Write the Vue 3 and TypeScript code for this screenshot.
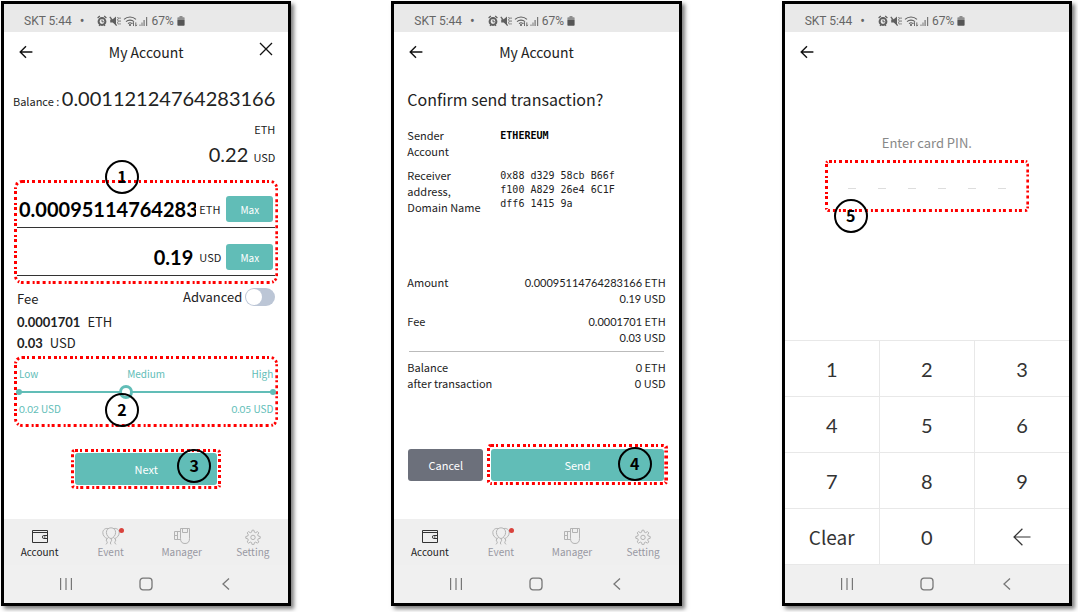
<script setup lang="ts">
import { ref } from 'vue'

type ScreenId = 'send' | 'confirm' | 'pin'
type TabIcon = 'wallet' | 'balloons' | 'card' | 'gear'

interface Screen {
  id: ScreenId
  title: string
  closable: boolean
  tabs: boolean
}

interface Tab {
  label: string
  icon: TabIcon
  badge: boolean
}

const screens: Screen[] = [
  { id: 'send', title: 'My Account', closable: true, tabs: true },
  { id: 'confirm', title: 'My Account', closable: false, tabs: true },
  { id: 'pin', title: '', closable: false, tabs: false },
]

const tabs: Tab[] = [
  { label: 'Account', icon: 'wallet', badge: false },
  { label: 'Event', icon: 'balloons', badge: true },
  { label: 'Manager', icon: 'card', badge: false },
  { label: 'Setting', icon: 'gear', badge: false },
]

const amountEth = ref('0.00095114764283166')
const amountUsd = ref('0.19')
const advanced = ref(false)
const feeLevel = ref(5)
const pin = ref<string[]>(['', '', '', '', '', ''])
const keys: string[] = ['1', '2', '3', '4', '5', '6', '7', '8', '9']

function press(key: string): void {
  const i = pin.value.indexOf('')
  if (i >= 0) pin.value[i] = key
}

function clearPin(): void {
  pin.value = ['', '', '', '', '', '']
}

function erase(): void {
  const filled = pin.value.filter((d) => d !== '').length
  if (filled > 0) pin.value[filled - 1] = ''
}
</script>

<template>
  <main class="board">
    <article v-for="s in screens" :key="s.id" class="phone">
      <div class="status">
        <span class="carrier">SKT 5:44</span>
        <span class="bullet">•</span>
        <svg class="status-icons" viewBox="0 0 51 12" width="51" height="12" aria-hidden="true">
          <g fill="none" stroke="#5f5f5f">
            <circle cx="5" cy="6.5" r="3.4" stroke-width="2" />
            <path d="M0.6 3 L2.8 1 M9.4 3 L7.2 1 M2 10.8 L3 9.6 M8 10.8 L7 9.6" stroke-width="1.2" />
            <path d="M5 4.6 V6.8 H6.8" stroke-width="1" />
            <path d="M12.8 1.8 L19.6 10.6" stroke-width="1.3" />
            <path d="M20.6 2 L21.4 3.4 L20.6 4.8 L21.4 6.2 L20.6 7.6 L21.4 9.4 M23 2.4 V4 M23 5.2 V7 M23 8.2 V9.6" stroke-width="0.9" />
            <path d="M27 4.4 C30.4 1.2 35.6 1.2 39 4.4 M29 6.6 C31.2 4.6 34.8 4.6 37 6.6 M31 8.6 C32.2 7.6 33.8 7.6 35 8.6" stroke-width="1.1" />
            <path d="M36.5 7.4 V11 M38.8 7.4 V11 M35.4 8.6 L36.5 7.2 M39.8 9.8 L38.8 11.2" stroke-width="0.9" />
          </g>
          <path d="M13.2 4.6 H15.4 L19 1.6 V10 L15.6 7.6 H13.2 Z" fill="#5f5f5f" />
          <circle cx="33" cy="10" r="1.1" fill="#5f5f5f" />
          <path d="M42.5 9.5 h1 v1.5 h-1 z M44.5 7.5 h1 v3.5 h-1 z M46.5 5 h1.2 v6 h-1.2 z M49 2 h1.2 v9 h-1.2 z" fill="#777" />
        </svg>
        <span class="percent">67%</span>
        <svg viewBox="0 0 8 10" width="8" height="10" aria-hidden="true">
          <path d="M2.5 0 H5.5 V1.2 H7 Q7.6 1.2 7.6 2 V4 H0.4 V2 Q0.4 1.2 1 1.2 H2.5 Z" fill="#8e8e8e" />
          <path d="M0.4 4 H7.6 V9 Q7.6 9.8 6.8 9.8 H1.2 Q0.4 9.8 0.4 9 Z" fill="#555" />
        </svg>
      </div>

      <header class="bar">
        <button class="icon-button" type="button" aria-label="Back">
          <svg viewBox="0 0 14 14" width="14" height="14" fill="none" stroke="#111" stroke-width="1.4">
            <path d="M13.4 7 H1.4 M7 1.2 L1.2 7 L7 12.8" />
          </svg>
        </button>
        <h1 class="title">{{ s.title }}</h1>
        <button v-if="s.closable" class="icon-button close" type="button" aria-label="Close">
          <svg viewBox="0 0 14 14" width="14" height="14" fill="none" stroke="#111" stroke-width="1.3">
            <path d="M1 1 L13 13 M13 1 L1 13" />
          </svg>
        </button>
      </header>

      <section v-if="s.id === 'send'" class="body">
        <div class="balance">
          <p class="balance-row">
            <span class="small">Balance : </span><span>0.00112124764283166</span>
          </p>
          <p class="balance-row"><span class="small">ETH</span></p>
          <p class="balance-row"><span>0.22</span> <span class="small">USD</span></p>
        </div>

        <div class="callout amounts">
          <svg class="outline" aria-hidden="true"><rect width="100%" height="100%" rx="8" /></svg>
          <div class="amount">
            <input id="amount-eth" v-model="amountEth" class="num amount-input" type="text" />
            <label for="amount-eth" class="unit">ETH</label>
            <button class="max" type="button">Max</button>
          </div>
          <div class="amount">
            <input id="amount-usd" v-model="amountUsd" class="num amount-input right" type="text" />
            <label for="amount-usd" class="unit">USD</label>
            <button class="max" type="button">Max</button>
          </div>
          <span class="step step-1">1</span>
        </div>

        <div class="fee">
          <div class="fee-head">
            <h2 class="fee-title">Fee</h2>
            <label class="advanced">
              Advanced
              <input v-model="advanced" class="switch" type="checkbox" role="switch" />
            </label>
          </div>
          <p class="fee-row"><b class="num">0.0001701</b><span>ETH</span></p>
          <p class="fee-row"><b class="num">0.03</b><span>USD</span></p>
        </div>

        <div class="callout levels">
          <svg class="outline" aria-hidden="true"><rect width="100%" height="100%" rx="8" /></svg>
          <div class="level-names"><span>Low</span><span>Medium</span><span>High</span></div>
          <div class="slider">
            <input v-model.number="feeLevel" type="range" min="0" max="12" aria-label="Fee level" />
          </div>
          <div class="level-values">
            <span><span class="num">0.02</span> USD</span>
            <span><span class="num">0.05</span> USD</span>
          </div>
          <span class="step step-2">2</span>
        </div>

        <div class="callout tight next">
          <svg class="outline" aria-hidden="true"><rect width="100%" height="100%" rx="4" /></svg>
          <button class="action" type="button">Next</button>
          <span class="step step-3">3</span>
        </div>
      </section>

      <section v-else-if="s.id === 'confirm'" class="body confirm">
        <h2 class="question">Confirm send transaction?</h2>
        <dl class="parties">
          <dt>Sender<br />Account</dt>
          <dd class="strong">ETHEREUM</dd>
          <dt>Receiver<br />address,<br />Domain Name</dt>
          <dd>0x88 d329 58cb B66f<br />f100 A829 26e4 6C1F<br />dff6 1415 9a</dd>
        </dl>
        <dl class="totals">
          <dt>Amount</dt>
          <dd><span class="num">0.00095114764283166</span> ETH<br /><span class="num">0.19</span> USD</dd>
          <dt>Fee</dt>
          <dd><span class="num">0.0001701</span> ETH<br /><span class="num">0.03</span> USD</dd>
        </dl>
        <hr class="rule" />
        <dl class="totals">
          <dt>Balance<br />after transaction</dt>
          <dd><span class="num">0</span> ETH<br /><span class="num">0</span> USD</dd>
        </dl>
        <div class="actions">
          <button class="action cancel" type="button">Cancel</button>
          <div class="callout tight send">
            <svg class="outline" aria-hidden="true"><rect width="100%" height="100%" rx="4" /></svg>
            <button class="action" type="button">Send</button>
            <span class="step step-4">4</span>
          </div>
        </div>
      </section>

      <section v-else class="body">
        <p class="prompt">Enter card PIN.</p>
        <div class="callout tight pin-box">
          <svg class="outline" aria-hidden="true"><rect width="100%" height="100%" rx="4" /></svg>
          <input
            v-for="(d, i) in pin"
            :key="i"
            class="digit"
            type="password"
            maxlength="1"
            :value="d"
            :aria-label="`PIN digit ${i + 1}`"
          />
          <span class="step step-5">5</span>
        </div>
        <div class="keypad">
          <button v-for="k in keys" :key="k" class="key num" type="button" @click="press(k)">{{ k }}</button>
          <button class="key" type="button" @click="clearPin">Clear</button>
          <button class="key num" type="button" @click="press('0')">0</button>
          <button class="key" type="button" aria-label="Delete" @click="erase">
            <svg viewBox="0 0 18 18" width="18" height="18" fill="none" stroke="#333" stroke-width="1.2">
              <path d="M17.5 9 H1.4 M9.4 0.8 L1 9 L9.4 17.2" />
            </svg>
          </button>
        </div>
      </section>

      <nav v-if="s.tabs" class="tabs">
        <a v-for="t in tabs" :key="t.label" href="#" class="tab" :class="{ active: t.icon === 'wallet' }">
          <svg v-if="t.icon === 'wallet'" viewBox="0 0 18 18" width="18" height="18" fill="none" stroke="#333" stroke-width="1">
            <path d="M1.5 3.5 H16.5 V15.5 H1.5 Z M1.5 5.5 H16.5" />
            <path d="M16.5 8.5 H12.6 Q11.5 8.5 11.5 10 Q11.5 11.5 12.6 11.5 H16.5 M13 10 H14.4" />
          </svg>
          <svg v-else-if="t.icon === 'balloons'" viewBox="0 0 18 18" width="18" height="18" fill="none" stroke="#b3b3b3" stroke-width="1">
            <path d="M9 0.8 C12 0.8 13.6 3 13.6 5.4 C13.6 8.4 11.4 11 9 11.6 C6.6 11 4.4 8.4 4.4 5.4 C4.4 3 6 0.8 9 0.8 Z" />
            <path d="M6.2 1.6 C3.4 0.8 0.8 2.8 0.8 5.6 C0.8 8.6 3 10.8 5.2 11.6 L6.6 10.4 M11.8 1.6 C14.6 0.8 17.2 2.8 17.2 5.6 C17.2 8.6 15 10.8 12.8 11.6 L11.4 10.4" />
            <path d="M5 11.8 Q3.4 13 4.8 14.4 T4 17.4 M9 11.8 Q10.4 13.2 9 14.6 T9 17.4 M13 11.8 Q14.6 13 13.2 14.4 T14 17.4" />
          </svg>
          <svg v-else-if="t.icon === 'card'" viewBox="0 0 18 18" width="18" height="18" fill="none" stroke="#b3b3b3" stroke-width="1">
            <path d="M7.5 1.5 H16.5 V11.5 Q16.5 16.5 12 16.5 Q7.5 16.5 7.5 11.5 Z M9.5 1.5 V5.5 H14.5 V1.5" />
            <path d="M7.5 4.5 H1.5 V12.5 H7.5 M4.5 4.5 V12.5 M1.5 8.5 H4.5" />
          </svg>
          <svg v-else viewBox="0 0 18 18" width="18" height="18" fill="none" stroke="#b3b3b3" stroke-width="1">
            <path d="M8.1 3.2 h1.8 l0.5 2 1.3 0.5 1.8 -1.1 1.3 1.3 -1.1 1.8 0.5 1.3 2 0.5 v1.8 l-2 0.5 -0.5 1.3 1.1 1.8 -1.3 1.3 -1.8 -1.1 -1.3 0.5 -0.5 2 h-1.8 l-0.5 -2 -1.3 -0.5 -1.8 1.1 -1.3 -1.3 1.1 -1.8 -0.5 -1.3 -2 -0.5 v-1.8 l2 -0.5 0.5 -1.3 -1.1 -1.8 1.3 -1.3 1.8 1.1 1.3 -0.5 z" />
            <circle cx="9" cy="10.4" r="2.2" />
          </svg>
          <i v-if="t.badge" class="dot"></i>
          <span>{{ t.label }}</span>
        </a>
      </nav>

      <nav class="system" aria-label="System">
        <button class="icon-button" type="button" aria-label="Recent apps">
          <svg viewBox="0 0 14 14" width="14" height="14" fill="none" stroke="#777" stroke-width="1.2">
            <path d="M1.6 1 V13 M7 1 V13 M12.4 1 V13" />
          </svg>
        </button>
        <button class="icon-button" type="button" aria-label="Home">
          <svg viewBox="0 0 14 14" width="14" height="14" fill="none" stroke="#777" stroke-width="1.3">
            <rect x="1" y="1.2" width="12" height="11.6" rx="3" />
          </svg>
        </button>
        <button class="icon-button" type="button" aria-label="Back">
          <svg viewBox="0 0 14 14" width="14" height="14" fill="none" stroke="#777" stroke-width="1.3">
            <path d="M10 1.4 L4 7 L10 12.6" />
          </svg>
        </button>
      </nav>
    </article>
  </main>
</template>

<style>
body {
  background: #fff;
}
</style>

<style scoped>
.board,
.board * {
  box-sizing: border-box;
}

.board {
  display: grid;
  grid-template-columns: repeat(3, minmax(0, 1fr));
  gap: 100px;
  min-height: 100vh;
  padding: 1px 6px 6px 1px;
  font-family: "Noto Sans CJK KR", "Noto Sans", sans-serif;
  color: #222;
}

.board h1,
.board h2,
.board p,
.board dl,
.board dd {
  margin: 0;
  font-weight: 400;
}

button,
input {
  margin: 0;
  padding: 0;
  border: 0;
  font: inherit;
  color: inherit;
  background: none;
}

.num {
  font-family: Lato, sans-serif;
}

.phone {
  display: flex;
  flex-direction: column;
  border: 3px solid #000;
  background: #fff;
  box-shadow: 3px 3px 4px rgba(0, 0, 0, 0.5);
}

.status {
  display: flex;
  align-items: center;
  height: 28px;
  padding: 6px 20px 0;
  background: #e9e9e9;
  color: #666;
  font: 12px/20px Roboto, sans-serif;
}

.bullet {
  margin: 0 13px 0 8px;
  font-size: 14px;
}

.percent {
  margin: 0 3px;
}

.bar {
  display: grid;
  grid-template-columns: 14px 1fr 14px;
  align-items: center;
  height: 40px;
  padding: 0 15px;
}

.title {
  font-size: 14px;
  line-height: 20px;
  text-align: center;
}

.icon-button {
  display: block;
  width: 14px;
  height: 14px;
}

.icon-button svg {
  display: block;
}

.close {
  margin-bottom: 6px;
}

.body {
  flex: 1;
  display: flex;
  flex-direction: column;
}

.balance {
  padding: 12px 13px 0 8px;
}

.balance-row {
  height: 28px;
  font: 20px/28px Lato, sans-serif;
  text-align: right;
  white-space: nowrap;
}

.small {
  font: 11px/1 "Noto Sans CJK KR", "Noto Sans", sans-serif;
}

.callout {
  position: relative;
}

/* The stroke is centred on the edge and clipped to its inner half. */
.outline {
  position: absolute;
  inset: 0;
  width: 100%;
  height: 100%;
  border-radius: 8px;
  overflow: hidden;
  fill: none;
  stroke: #f00;
  stroke-width: 6px;
  stroke-dasharray: 3 2 2 3 3 3;
  pointer-events: none;
}

.tight .outline {
  border-radius: 4px;
}

.step {
  position: absolute;
  width: 34px;
  height: 34px;
  border: 2px solid #000;
  border-radius: 50%;
  color: #000;
  font-size: 16px;
  font-weight: 700;
  line-height: 28px;
  text-align: center;
  pointer-events: none;
}

.step-1 {
  left: 91px;
  top: -20px;
}

.step-2 {
  left: 91px;
  bottom: 0;
}

.step-3 {
  right: 10px;
  top: 0;
}

.step-4 {
  right: 16px;
  top: 3px;
}

.step-5 {
  left: 9px;
  bottom: -21px;
}

.amounts {
  margin: 12px 10px 0;
  padding: 0 3px 8px;
}

.amount {
  display: flex;
  align-items: flex-end;
  height: 48px;
  padding: 0 2px 5px;
  border-bottom: 1px solid #333;
}

.amount-input {
  flex: 1;
  width: 0;
  min-width: 0;
  height: 26px;
  font-size: 20px;
  font-weight: 700;
  color: #000;
}

.right {
  padding-right: 3px;
  text-align: right;
}

.unit {
  width: 30px;
  padding-left: 3px;
  font-size: 11px;
  line-height: 26px;
}

.max {
  width: 47px;
  height: 26px;
  border-radius: 3px;
  background: #61bdb7;
  color: #fff;
  font-size: 10px;
}

.fee {
  padding: 0 13px;
}

.fee-head {
  display: flex;
  justify-content: space-between;
  height: 27px;
}

.fee-title {
  align-self: flex-end;
  font-size: 13px;
  line-height: 24px;
}

.advanced {
  display: flex;
  align-items: center;
  gap: 3px;
  height: 25px;
  font-size: 13px;
}

.switch {
  appearance: none;
  width: 30px;
  height: 18px;
  padding: 1px;
  border-radius: 9px;
  background: #bcc6d6;
}

.switch::before {
  content: "";
  display: block;
  width: 16px;
  height: 16px;
  border-radius: 50%;
  background: #fff;
}

.switch:checked::before {
  margin-left: 12px;
}

.fee-row {
  display: flex;
  align-items: baseline;
  gap: 7px;
  height: 21px;
  font-size: 13px;
  line-height: 21px;
}

.levels {
  margin: 3px 10px 0;
  padding: 9px 5px;
  color: #61bdb7;
  font-size: 10px;
  line-height: 18px;
}

.level-names {
  display: grid;
  grid-template-columns: 1fr auto 1fr;
}

.level-names :last-child {
  text-align: right;
}

.level-values {
  display: flex;
  justify-content: space-between;
}

.level-values .num,
.totals .num {
  line-height: 1;
}

.slider {
  position: relative;
  display: flex;
  align-items: center;
  height: 17px;
}

.slider::before,
.slider::after {
  content: "";
  position: absolute;
  left: -3px;
  width: 6px;
  height: 6px;
  border-radius: 50%;
  background: #61bdb7;
}

.slider::after {
  left: auto;
  right: -3px;
}

.slider input {
  appearance: none;
  width: 100%;
  height: 14px;
}

.slider input::-webkit-slider-runnable-track {
  height: 2px;
  background: #61bdb7;
}

.slider input::-webkit-slider-thumb {
  appearance: none;
  width: 14px;
  height: 14px;
  margin-top: -6px;
  border: 3px solid #61bdb7;
  border-radius: 50%;
  background: #fff;
}

.next {
  align-self: center;
  width: 150px;
  margin-top: 22px;
  padding: 4px;
}

.action {
  display: block;
  width: 100%;
  height: 32px;
  border-radius: 3px;
  background: #61bdb7;
  color: #fff;
  font-size: 11px;
}

.confirm {
  padding: 0 13px;
  font-size: 11px;
  line-height: 16px;
}

.board .question {
  margin-top: 15px;
  font-size: 16px;
  line-height: 24px;
}

.board .parties {
  display: grid;
  grid-template-columns: 93px 1fr;
  row-gap: 8px;
  margin-top: 16px;
}

.parties dd {
  padding-top: 2px;
  font: 10px/14px "DejaVu Sans Mono", monospace;
}

.board .parties .strong {
  font-weight: 700;
  color: #000;
}

.totals {
  display: grid;
  grid-template-columns: auto 1fr;
  row-gap: 7px;
}

.board .parties + .totals {
  margin-top: 59px;
}

.totals dd {
  text-align: right;
}

.rule {
  width: calc(100% - 4px);
  height: 1px;
  margin: 6px 2px 7px;
  border: 0;
  background: #bbb;
}

.actions {
  display: flex;
  align-items: center;
  gap: 4px;
  margin: 53px -2px 0 1px;
}

.cancel {
  width: 75px;
  background: #6c707b;
}

.send {
  flex: 1;
  padding: 5px 4px 4px;
}

.prompt {
  padding-top: 61px;
  color: #888;
  font-size: 13px;
  line-height: 20px;
  text-align: center;
}

.pin-box {
  display: flex;
  justify-content: center;
  gap: 22px;
  margin: 7px 40px 0;
  padding: 14px 0 23px;
}

.digit {
  width: 8px;
  height: 15px;
  border-bottom: 1px solid #ddd;
}

.keypad {
  display: grid;
  grid-template-columns: repeat(3, 1fr);
  grid-auto-rows: 55px;
  gap: 1px;
  margin-top: auto;
  padding: 1px 0;
  background: #e8e8e8;
}

.key {
  display: flex;
  align-items: center;
  justify-content: center;
  background: #fff;
  color: #333;
  font-size: 19px;
}

.key.num {
  font-family: Lato, sans-serif;
  font-size: 20px;
}

.tabs {
  display: grid;
  grid-template-columns: repeat(4, 1fr);
  height: 46px;
  background: #efefef;
}

.tab {
  position: relative;
  display: flex;
  flex-direction: column;
  align-items: center;
  padding-top: 8px;
  color: #9898a2;
  font-size: 10px;
  line-height: 14px;
  text-decoration: none;
}

.active {
  color: #222;
}

.dot {
  position: absolute;
  top: 9px;
  left: calc(50% + 8px);
  width: 5px;
  height: 5px;
  border-radius: 50%;
  background: #d9423c;
}

.system {
  display: flex;
  align-items: center;
  justify-content: space-between;
  height: 38px;
  padding: 0 55px;
  background: #f0f0f0;
}
</style>
